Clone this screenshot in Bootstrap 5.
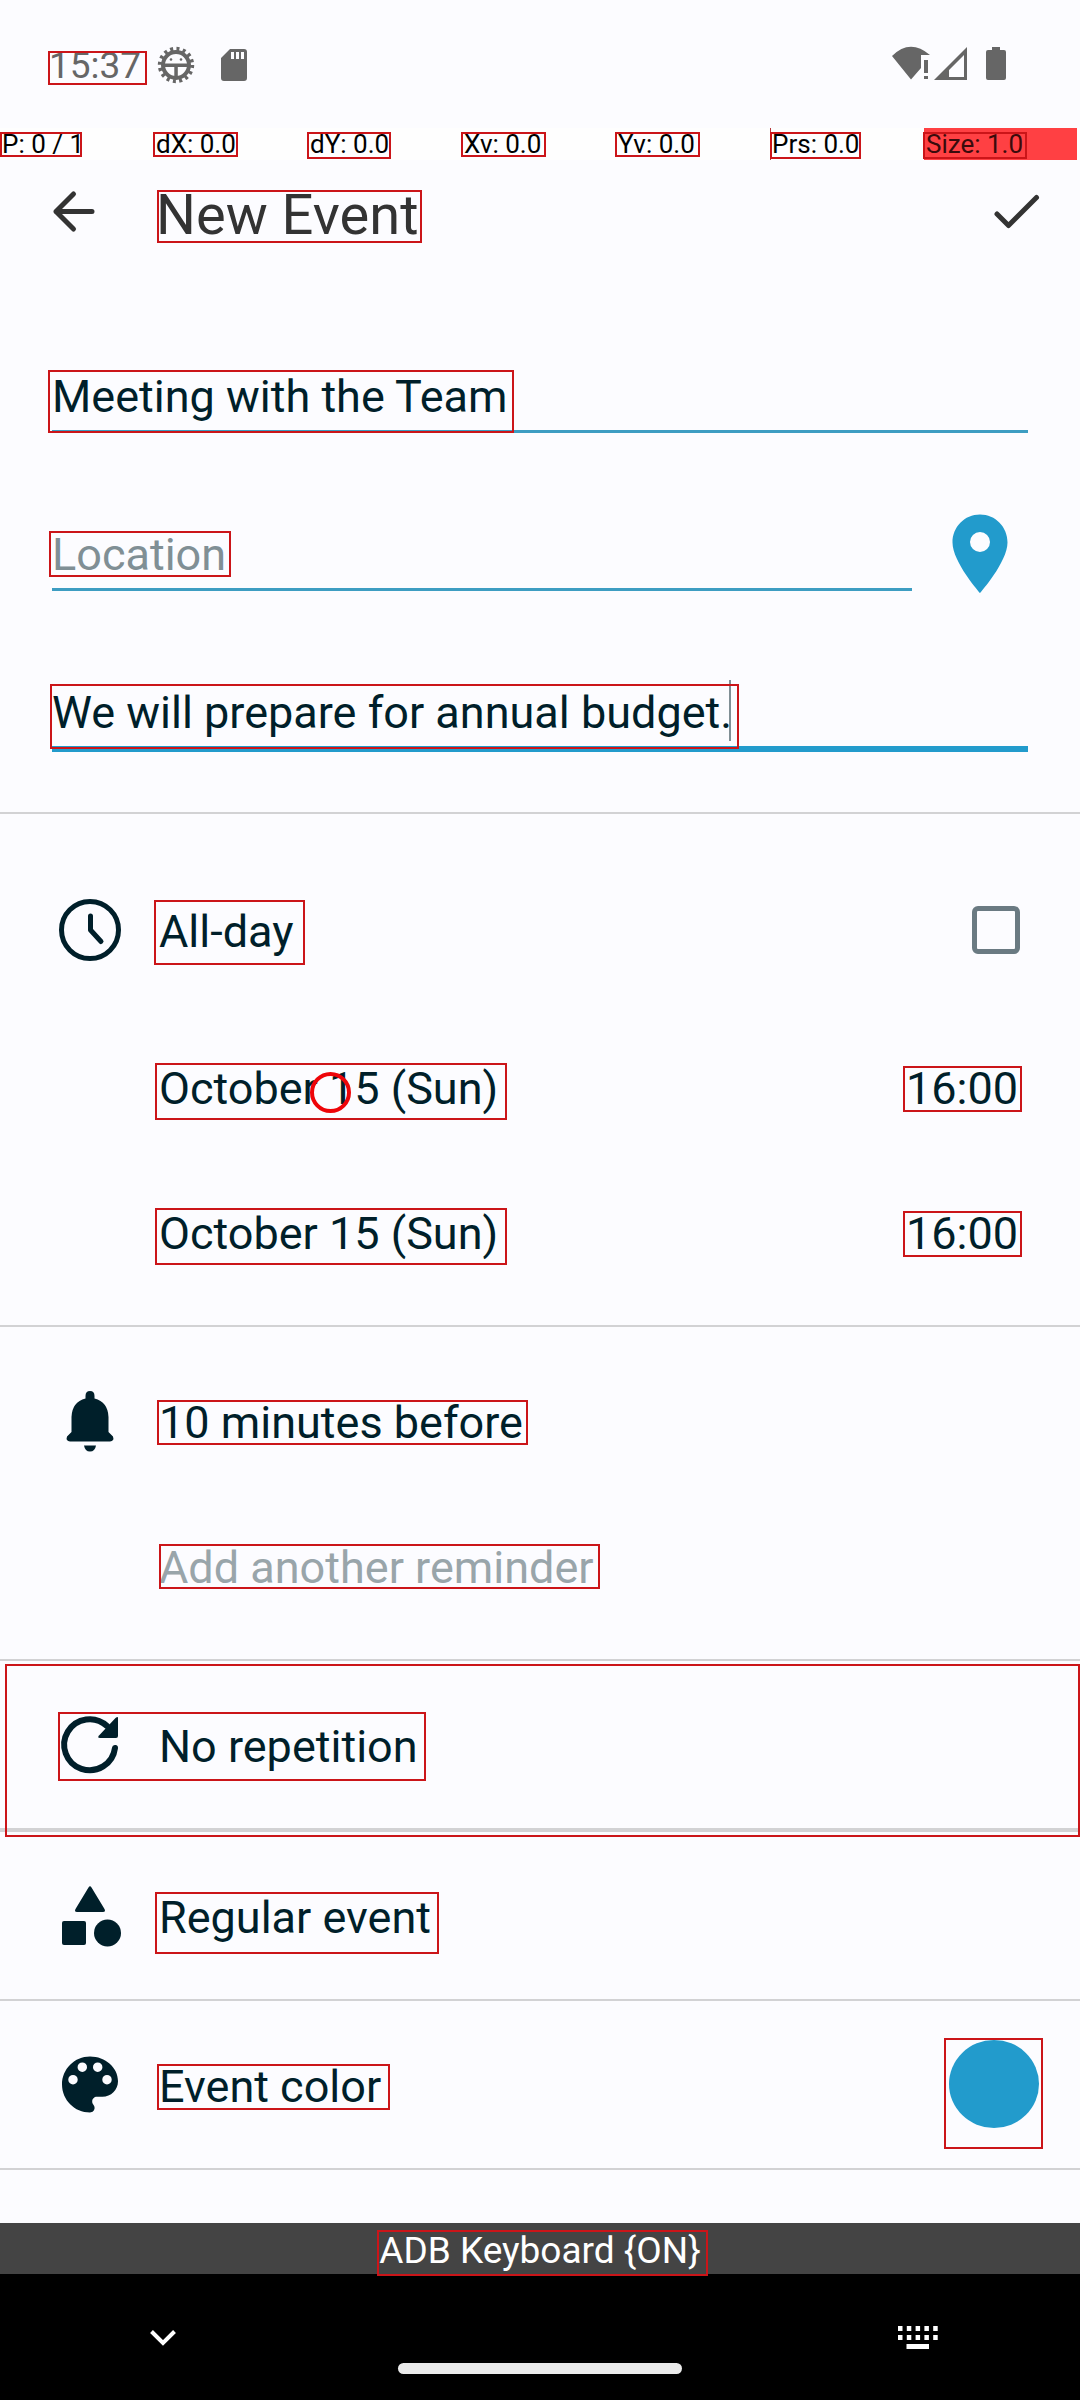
<!DOCTYPE html>
<html lang="en">
<head>
<meta charset="utf-8">
<meta name="viewport" content="width=device-width, initial-scale=1">
<title>New Event</title>
<link rel="stylesheet" href="https://cdn.jsdelivr.net/npm/bootstrap@5.3.0/dist/css/bootstrap.min.css">
<style>
  body { background: #fcfcff; color: #001f2a; font-family: Roboto, "Noto Sans", sans-serif; font-size: 45px; line-height: 54px; }
  svg { display: block; overflow: visible; flex: none; }
  button { color: inherit; line-height: inherit; }
  .plain { background: none; border: 0; padding: 0; text-align: left; }

  /* status bar */
  .statusbar { padding: 44px 66px 40px 49px; gap: 12px; font-size: 37px; line-height: 44px; color: #666; }
  /* pointer readout strip */
  .readout { padding-right: 2px; font-size: 26px; line-height: 32px; color: #000; background: #fefefe; }
  .readout > div { flex: 1 1 0; padding-left: 2px; margin-right: 1px; }
  .readout .edge { border-left: 1px solid #b8383c; padding-left: 1px; }
  .readout .hot { background: #ff4043; color: #3a0b0c; }

  .appbar { padding: 22px 28px 0 40px; color: #333; }
  .appbar h1 { font-size: 56px; line-height: 66px; font-weight: 400; color: #333; }

  .fields { padding: 122px 52px 60px; display: grid; gap: 95px; }
  .line-input { display: block; width: 100%; height: 63px; padding: 0 0 8px; border: 0; border-bottom: 3px solid #3d9dc2; border-radius: 0; background: none; color: #001f2a; font: inherit; outline: 0; }
  .line-input::placeholder { color: #808f95; opacity: 1; }
  .line-input.active { height: 66px; border-bottom: 6px solid #229bcc; }
  .caret { left: 677px; top: -6px; width: 2px; height: 61px; background: #808f95; }

  .part { border-top: 2px solid #d2d2d4; padding: 59px 52px 54px; position: relative; }
  .part.thick { border-top-width: 4px; }
  .part.times { padding-top: 91px; padding-bottom: 64px; }
  .part.alerts { padding-top: 69px; padding-bottom: 64px; }
  .part.last { padding: 0 0 53px; }
  .lead-space { padding-left: 107px; }
  .gap-l { margin-top: 103px; }
  .gap-m { margin-top: 91px; }
  .muted-text { color: #99a5aa; }
  .tick { width: 48px; height: 48px; margin: 0 8px 4px 0; border: 5px solid #6a7a82; border-radius: 6px; background: none; appearance: none; }
  .swatch { width: 90px; height: 88px; margin: -20px -11px -14px 0; border-radius: 50%; background: #229bcc; }
  .clock-btn { margin-right: 10px; }

  .imebar { background: #444; color: #fff; font-size: 37px; line-height: 44px; padding: 6px 0 1px; }
  .navpad { background: #000; color: #fff; padding: 39px 130px 26px; }
  .pill { width: 284px; height: 11px; border-radius: 6px; background: #ebebeb; }

  /* outlines drawn over detected elements */
  .hit { position: relative; }
  .hit::after { content: ""; position: absolute; z-index: 2; pointer-events: none; border: 2px solid #cb1519; left: var(--l); top: var(--t); width: var(--w); height: var(--h); }
  .h-clock { --l: -1px; --t: 7px; --w: 99px; --h: 34px; }
  .h-r1 { --l: 0; --t: 4px; --w: 82px; --h: 25px; }
  .h-r2 { --l: -1px; --t: 4px; --w: 85px; --h: 25px; }
  .h-r3 { --l: -1px; --t: 4px; --w: 84px; --h: 27px; }
  .h-r4 { --l: -1px; --t: 4px; --w: 91px; --h: 27px; }
  .h-r5 { --l: -1px; --t: 4px; --w: 104px; --h: 27px; }
  .h-title { --l: 1px; --t: 8px; --w: 265px; --h: 53px; }
  .h-name { --l: -4px; --t: 0; --w: 466px; --h: 63px; }
  .h-loc { --l: -3px; --t: 3px; --w: 182px; --h: 46px; }
  .h-desc { --l: -2px; --t: -2px; --w: 689px; --h: 65px; }
  .h-allday { --l: -5px; --t: -5px; --w: 151px; --h: 65px; }
  .h-date { --l: -4px; --t: 1px; --w: 352px; --h: 57px; }
  .h-time { --l: -3px; --t: 4px; --w: 119px; --h: 46px; }
  .h-remind { --l: -2px; --t: 4px; --w: 371px; --h: 45px; }
  .h-add { --l: 0; --t: 3px; --w: 441px; --h: 45px; }
  .h-repeat { --l: 6px; --t: -8px; --w: 368px; --h: 69px; }
  .h-section { --l: 5px; --t: 3px; --w: calc(100% - 5px); --h: 173px; }
  .h-type { --l: -4px; --t: 1px; --w: 284px; --h: 62px; }
  .h-color { --l: -2px; --t: 4px; --w: 233px; --h: 46px; }
  .h-swatch { --l: -5px; --t: -2px; --w: 99px; --h: 111px; }
  .h-ime { --l: -2px; --t: 1px; --w: 331px; --h: 46px; }
  .touch { left: 151px; top: 10px; width: 41px; height: 41px; border: 4px solid #ee0509; border-radius: 50%; z-index: 3; }
</style>
</head>
<body>
<div class="d-flex flex-column min-vh-100">

  <div class="statusbar d-flex align-items-center">
    <span class="hit h-clock">15:37</span>
    <svg class="ms-auto order-2" width="132" height="44" viewBox="882 44 132 44" fill="#666" aria-hidden="true">
      <path d="M892 56Q910 38 930 55H921V68L911 79.500Z"/>
      <path d="M924 60h4v13h-4zM924 76h4v3h-4z"/>
      <path fill-rule="evenodd" d="M967 47V80H934ZM964 55L949 70V77H964Z"/>
      <path d="M992 47h8v3h4q2 0 2 2v26q0 2-2 2h-16q-2 0-2-2V52q0-2 2-2h4z"/>
    </svg>
    <svg width="100" height="44" viewBox="154 44 100 44" fill="#666" aria-hidden="true">
      <circle cx="177" cy="65" r="16.200" fill="none" stroke="#666" stroke-width="4" stroke-dasharray="3 3.360"/>
      <circle cx="177" cy="65" r="13" fill="none" stroke="#666" stroke-width="4"/>
      <path d="M163 63.500h28v3.500h-28zM175.300 66h3.500v13h-3.500z"/>
      <circle cx="172" cy="59.500" r="1.300"/><circle cx="182" cy="59.500" r="1.300"/>
      <path fill-rule="evenodd" d="M231 49h14q3 0 3 3v26q0 3-3 3h-20q-3 0-3-3V58ZM232 52v7h3v-7zM237 52v7h3v-7zM242 52v7h3v-7z"/>
    </svg>
  </div>

  <div class="readout d-flex">
    <div class="hit h-r1">P: 0 / 1</div>
    <div class="hit h-r2">dX: 0.0</div>
    <div class="hit h-r3">dY: 0.0</div>
    <div class="hit h-r2">Xv: 0.0</div>
    <div class="hit h-r2">Yv: 0.0</div>
    <div class="hit h-r4 edge">Prs: 0.0</div>
    <div class="hit h-r5 hot">Size: 1.0</div>
  </div>

  <header class="appbar d-flex align-items-start">
    <button class="plain" type="button" aria-label="Back">
      <svg width="116" height="64" viewBox="40 182 116 64" fill="none" stroke="#333" stroke-width="5" stroke-linecap="round" stroke-linejoin="round"><path d="M92 211.500H56M73.500 194L56 211.500L73.500 229"/></svg>
    </button>
    <h1 class="hit h-title m-0">New Event</h1>
    <button class="plain ms-auto" type="button" aria-label="Save">
      <svg width="72" height="64" viewBox="980 182 72 64" fill="none" stroke="#333" stroke-width="5" stroke-linecap="round" stroke-linejoin="round"><path d="M997 214L1008.500 225.500L1036.500 197.500"/></svg>
    </button>
  </header>

  <form class="m-0">
    <div class="fields">
      <div class="hit h-name"><input class="line-input" type="text" aria-label="Title" value="Meeting with the Team"></div>
      <div class="d-flex">
        <div class="hit h-loc flex-grow-1"><input class="line-input" type="text" aria-label="Location" placeholder="Location"></div>
        <button class="plain" type="button" aria-label="Pick location">
          <svg width="116" height="63" viewBox="912 528 116 63"><path fill="#229bcc" fill-rule="evenodd" d="M980 514.500C964.500 514.500 952.500 527 952.500 542.500C952.500 562 980 593 980 593S1007.500 562 1007.500 542.500C1007.500 527 995.500 514.500 980 514.500ZM980 532A10 10 0 1 1 980 552A10 10 0 1 1 980 532Z"/></svg>
        </button>
      </div>
      <div class="hit h-desc"><input class="line-input active" type="text" aria-label="Description" value="We will prepare for annual budget."><span class="caret position-absolute"></span></div>
    </div>

    <section class="part times">
      <div class="d-flex align-items-center">
        <svg width="107" height="54" viewBox="52 905 107 54" fill="none" stroke="#001f2a" stroke-width="5" stroke-linecap="round" stroke-linejoin="round"><circle cx="90" cy="930" r="28.500"/><path d="M90.500 916V930L101 941.500"/></svg>
        <label class="hit h-allday" for="allday">All-day</label>
        <div class="ms-auto"><input class="tick d-block" type="checkbox" id="allday"></div>
      </div>
      <div class="d-flex justify-content-between lead-space gap-l">
        <button class="plain hit h-date" type="button">October 15 (Sun)<span class="touch position-absolute"></span></button>
        <button class="plain hit h-time clock-btn" type="button">16:00</button>
      </div>
      <div class="d-flex justify-content-between lead-space gap-m">
        <button class="plain hit h-date" type="button">October 15 (Sun)</button>
        <button class="plain hit h-time clock-btn" type="button">16:00</button>
      </div>
    </section>

    <section class="part alerts">
      <div class="d-flex">
        <svg width="107" height="54" viewBox="52 1396 107 54" fill="#001f2a"><path d="M90 1391Q94.500 1391 94.500 1396V1398.500Q108 1402 108.500 1417V1432L113 1436.500Q114.500 1441 110 1441.500H70Q65.500 1441 67 1436.500L71.500 1432V1417Q72 1402 85.500 1398.500V1396Q85.500 1391 90 1391ZM84 1445.500H96Q95 1451.500 90 1451.500T84 1445.500Z"/></svg>
        <button class="plain hit h-remind" type="button">10 minutes before</button>
      </div>
      <div class="lead-space gap-m d-flex">
        <button class="plain hit h-add muted-text" type="button">Add another reminder</button>
      </div>
    </section>

    <section class="part hit h-section">
      <button class="plain hit h-repeat d-flex" type="button">
        <svg width="107" height="54" viewBox="52 1720 107 54"><path d="M107 1726A25.500 25.500 0 1 0 115 1748" fill="none" stroke="#001f2a" stroke-width="6" stroke-linecap="round"/><path d="M118 1718V1736Q118 1738 116 1738H100Q97 1738 99 1735.500L115.500 1718Q118 1716 118 1718Z" fill="#001f2a"/></svg>
        <span>No repetition</span>
      </button>
    </section>

    <section class="part thick">
      <div class="d-flex">
        <svg width="107" height="54" viewBox="52 1891 107 54" fill="#001f2a"><path d="M88.500 1887.500Q90 1885 91.500 1887.500L104.500 1909Q106 1912 103 1912H77Q74 1912 75.500 1909Z"/><rect x="62" y="1921" width="24" height="24" rx="2"/><circle cx="107.500" cy="1933" r="13.500"/></svg>
        <button class="plain hit h-type" type="button">Regular event</button>
      </div>
    </section>

    <section class="part">
      <div class="d-flex">
        <svg width="107" height="54" viewBox="52 2060 107 54"><path fill="#001f2a" fill-rule="evenodd" d="M90 2056.500C74.500 2056.500 62 2069 62 2084.500S74.500 2112.500 90 2112.500C92.600 2112.500 94.600 2110.400 94.600 2107.800C94.600 2106.600 94.200 2105.500 93.400 2104.700C92.700 2103.800 92.200 2102.800 92.200 2101.500C92.200 2098.900 94.300 2096.800 96.900 2096.800H102.400C111 2096.800 118 2089.800 118 2081.200C118 2067.600 105.400 2056.500 90 2056.500ZM73 2075a4.700 4.700 0 1 1 0 9.400a4.700 4.700 0 1 1 0-9.400ZM82.300 2062.500a4.700 4.700 0 1 1 0 9.400a4.700 4.700 0 1 1 0-9.400ZM97.700 2062.500a4.700 4.700 0 1 1 0 9.400a4.700 4.700 0 1 1 0-9.400ZM107 2075a4.700 4.700 0 1 1 0 9.400a4.700 4.700 0 1 1 0-9.400Z"/></svg>
        <button class="plain hit h-color" type="button">Event color</button>
        <button class="plain hit h-swatch swatch ms-auto" type="button" aria-label="Event color swatch"></button>
      </div>
    </section>
    <div class="part last"></div>
  </form>

  <div class="imebar text-center"><span class="hit h-ime d-inline-block">ADB Keyboard {ON}</span></div>
  <nav class="navpad flex-grow-1">
    <div class="d-flex justify-content-between">
      <button class="plain" type="button" aria-label="Hide keyboard">
        <svg width="66" height="50" viewBox="130 2313 66 50" fill="none" stroke="#fff" stroke-width="4"><path d="M151.500 2331.500L163 2343L174.500 2331.500"/></svg>
      </button>
      <button class="plain" type="button" aria-label="Switch keyboard">
        <svg width="66" height="50" viewBox="884 2313 66 50" fill="none" stroke="#fff"><path stroke-width="5" stroke-dasharray="4.500 4.300" d="M898 2328.500h41M898 2337.500h41"/><path stroke-width="5" d="M906.500 2346.500h22.500"/></svg>
      </button>
    </div>
    <div class="pill mx-auto"></div>
  </nav>
</div>
<script src="https://cdn.jsdelivr.net/npm/bootstrap@5.3.0/dist/js/bootstrap.bundle.min.js"></script>
</body>
</html>
